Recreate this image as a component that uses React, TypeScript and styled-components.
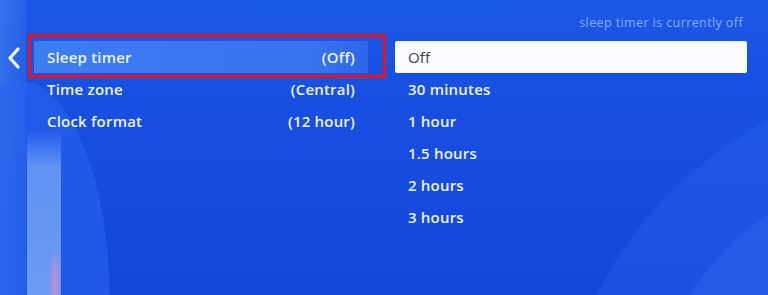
import styled, { createGlobalStyle } from 'styled-components';

const GlobalStyle = createGlobalStyle`
  html, body {
    margin: 0;
    padding: 0;
    background: #1448dc;
  }
  * {
    box-sizing: border-box;
  }
`;

const menuItems = [
  { label: 'Sleep timer', value: '(Off)' },
  { label: 'Time zone', value: '(Central)' },
  { label: 'Clock format', value: '(12 hour)' },
];

const options = ['Off', '30 minutes', '1 hour', '1.5 hours', '2 hours', '3 hours'];

const BackChevron = () => (
  <svg width="14" height="22" viewBox="0 0 14 22" aria-hidden="true">
    <path
      d="M11 2 L3 11 L11 20"
      fill="none"
      stroke="#f4f7ff"
      strokeWidth="3.2"
      strokeLinecap="round"
      strokeLinejoin="round"
    />
  </svg>
);

const App = () => {
  return (
    <>
      <GlobalStyle />
      <Screen>
        <Header>
          <Caption>sleep timer is currently off</Caption>
        </Header>
        <Body>
          <BackColumn>
            <BackChevron />
          </BackColumn>
          <Menu>
            {menuItems.map((item, index) => (
              <MenuRow key={item.label} $active={index === 0}>
                <span>{item.label}</span>
                <span>{item.value}</span>
              </MenuRow>
            ))}
          </Menu>
          <Options>
            {options.map((option, index) => (
              <OptionRow key={option} $selected={index === 0}>
                {option}
              </OptionRow>
            ))}
          </Options>
        </Body>
      </Screen>
    </>
  );
};

// tv backdrop: pale streak bottom left, soft arcs bottom right
const Screen = styled.div`
  width: 768px;
  height: 295px;
  overflow: hidden;
  font-family: 'Open Sans', 'Noto Sans', sans-serif;
  color: #eef3ff;
  background:
    radial-gradient(ellipse 8px 50px at 8px 165px, rgba(235, 140, 200, 0.7), transparent 80%) 47px 120px / 16px 175px no-repeat,
    linear-gradient(180deg, rgba(140, 185, 250, 0) 0%, rgba(140, 185, 250, 0.6) 22%, rgba(150, 190, 250, 0.65) 100%) 27px 130px / 34px 165px no-repeat,
    radial-gradient(circle 410px at 960px 480px, rgba(70, 130, 255, 0.16) 99%, transparent 100%),
    radial-gradient(circle 330px at 960px 480px, rgba(90, 150, 255, 0.14) 99%, transparent 100%),
    radial-gradient(ellipse 90px 220px at 20px 300px, rgba(40, 100, 240, 0.55) 99%, transparent 100%),
    linear-gradient(90deg, rgba(80, 140, 240, 0.5) 0px, rgba(60, 120, 235, 0.3) 26px, transparent 26px),
    linear-gradient(180deg, #1c58e6 0%, #1850e2 30%, #1446dc 100%);
`;

const Header = styled.div`
  height: 34px;
  display: flex;
  justify-content: flex-end;
  align-items: center;
  padding: 0 25px 0 0;
`;

const Caption = styled.div`
  font-size: 12.5px;
  letter-spacing: 0.4px;
  color: #86aef6;
  padding-top: 11px;
`;

const Body = styled.div`
  display: flex;
  padding-top: 7px;
`;

const BackColumn = styled.div`
  width: 34px;
  display: flex;
  justify-content: flex-start;
  padding: 6px 0 0 7px;
`;

const Menu = styled.div`
  width: 334px;
  display: flex;
  flex-direction: column;
`;

const MenuRow = styled.div<{ $active: boolean }>`
  position: relative;
  height: 32px;
  display: flex;
  justify-content: space-between;
  align-items: center;
  padding: 0 13px;
  font-size: 15px;
  font-weight: 600;
  letter-spacing: 0.2px;
  background: ${({ $active }) =>
    $active ? 'linear-gradient(90deg, #3d7df2, #3673ee 85%, #2d66ea)' : 'transparent'};

  ${({ $active }) =>
    $active &&
    `
    &::after {
      content: '';
      position: absolute;
      top: -7px;
      bottom: -5px;
      left: -6px;
      right: -18px;
      border: 3px solid #e8141c;
    }
  `}
`;

const Options = styled.div`
  margin-left: 27px;
  width: 352px;
  display: flex;
  flex-direction: column;
`;

const OptionRow = styled.div<{ $selected: boolean }>`
  height: 32px;
  display: flex;
  align-items: center;
  padding: 0 13px;
  font-size: 15px;
  font-weight: ${({ $selected }) => ($selected ? 400 : 600)};
  letter-spacing: 0.2px;
  color: ${({ $selected }) => ($selected ? '#3e434e' : '#eef3ff')};
  background: ${({ $selected }) => ($selected ? '#fbfcff' : 'transparent')};
  border-radius: ${({ $selected }) => ($selected ? '2px' : '0')};
`;

export default App;
